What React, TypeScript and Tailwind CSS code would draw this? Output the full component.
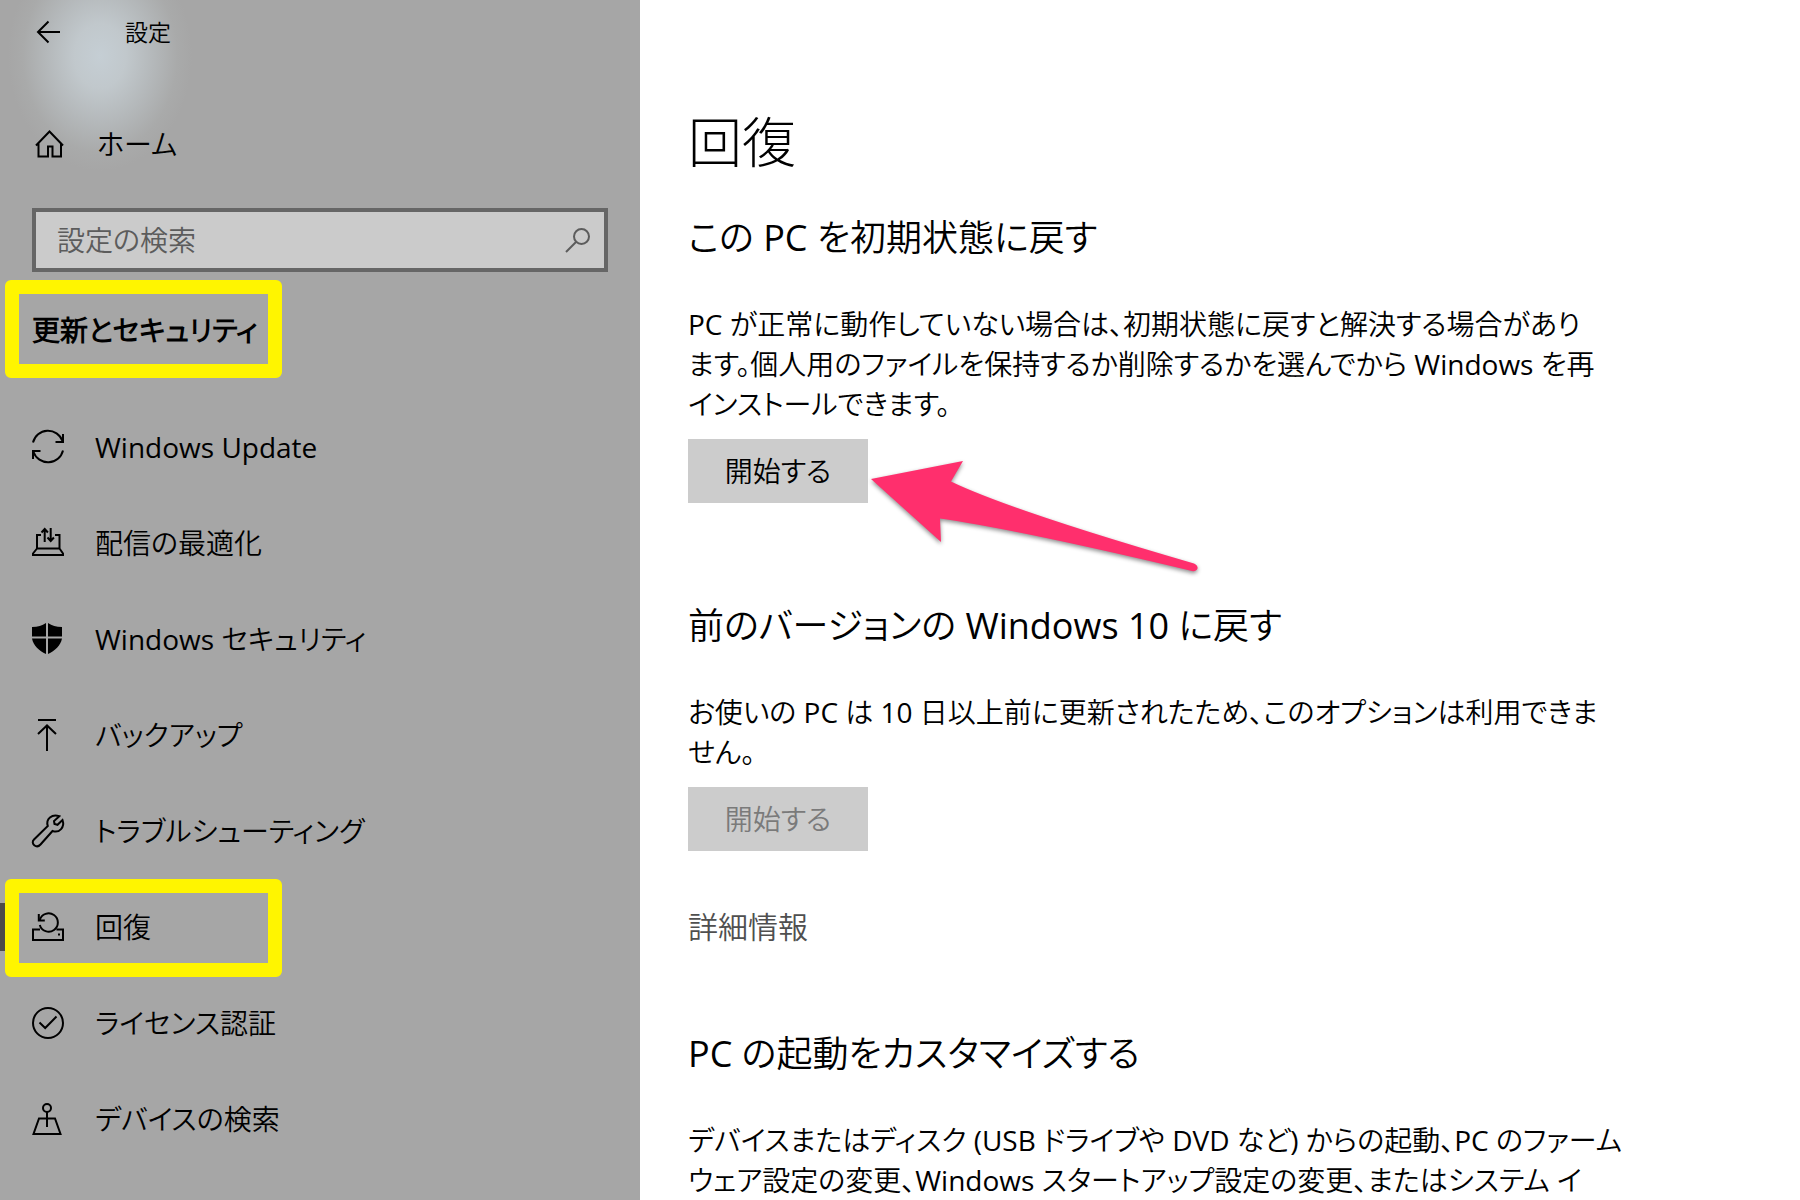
import type { ReactNode } from 'react';

type NavItem = {
  label: string;
  icon: ReactNode;
  active?: boolean;
};

function Icon({ children }: { children: ReactNode }) {
  return (
    <svg viewBox="0 0 32 32" className="size-8 shrink-0 overflow-visible" fill="none" stroke="currentColor" strokeWidth="2" aria-hidden="true">
      {children}
    </svg>
  );
}

const navItems: NavItem[] = [
  {
    label: 'Windows Update',
    icon: (
      <Icon>
        <path d="M1 11.5A15.4 15.4 0 0 1 30.5 10M31 3v8h-7.5M31 19.5A15.4 15.4 0 0 1 1.5 21M1 28v-8h7.5" />
      </Icon>
    ),
  },
  {
    label: '配信の最適化',
    icon: (
      <Icon>
        <path d="M9 8H5v14M23 8h4.5v14M5 21.5h22.5M5 21.5l-4 5V28h30v-1.5l-3.5-5" />
        <path d="M12.7 15V2M9.5 5.5 12.7 2l3.2 3.5M18.7 1v13M15.5 10.5l3.2 3.5 3.2-3.5" />
      </Icon>
    ),
  },
  {
    label: 'Windows セキュリティ',
    icon: (
      <Icon>
        <g fill="currentColor" stroke="none">
          <path d="M14 0v13.5H0V4c6 0 10-1.5 14-4ZM16 0c4 2.5 8 4 14 4v9.5H16ZM0 15.5h14V31C7 27.5 1.5 23 0 15.5ZM16 15.5h14C28.5 23 23 27.5 16 31Z" />
        </g>
      </Icon>
    ),
  },
  {
    label: 'バックアップ',
    icon: (
      <Icon>
        <path d="M6 1h18M15 32V7M6 15l9-8.5 9 8.5" />
      </Icon>
    ),
  },
  {
    label: 'トラブルシューティング',
    icon: (
      <Icon>
        <path d="M27.3 1.2 22 6l.5 3 3 .8L30.5 5C33 12 27.5 18.5 20.5 16l-12 13.5C4.5 34-2 28.5 2 24.5L15.8 11C13.5 4 20-1.5 27.3 1.2Z" />
      </Icon>
    ),
  },
  {
    label: '回復',
    active: true,
    icon: (
      <Icon>
        <path d="M8 18.5H1V29h30V18.5h-6.5M6.8 3v6.5h6" />
        <path d="M7.8 9A9.2 9.2 0 1 1 7.8 14" />
        <path d="M26 23.5h2" />
      </Icon>
    ),
  },
  {
    label: 'ライセンス認証',
    icon: (
      <Icon>
        <circle cx="16" cy="16" r="15" />
        <path d="m7.5 15.5 5.7 5.5L24.5 9.5" />
      </Icon>
    ),
  },
  {
    label: 'デバイスの検索',
    icon: (
      <Icon>
        <circle cx="15" cy="5" r="4" />
        <path d="M15 9v15M7 15.5h16L28.5 31H1.5Z" />
      </Icon>
    ),
  },
];

function Highlight() {
  return (
    <span className="pointer-events-none absolute top-0 left-[5px] z-10 h-[98px] w-[277px] rounded-md border-14 border-[#fff500]" />
  );
}

function Sidebar() {
  return (
    <aside className="w-[640px] shrink-0 bg-[#a6a6a6] bg-[radial-gradient(ellipse_92px_115px_at_100px_56px,#c5ced4_0%,#c1c8cc_28%,#b4b8ba_58%,#a9aaaa_84%,#a6a6a6_100%)]">
      <header className="flex h-16 items-center gap-[61px] pl-9">
        <button type="button" aria-label="戻る">
          <svg viewBox="0 0 28 28" className="size-7" fill="none" stroke="currentColor" strokeWidth="2" aria-hidden="true">
            <path d="M24 14H2M12.5 3.5 2 14l10.5 10.5" />
          </svg>
        </button>
        <span className="text-[23px]">設定</span>
      </header>

      <a href="#home" className="mt-8 flex h-24 items-center gap-[31px] pl-[34px]">
        <svg viewBox="0 0 32 32" className="size-8" fill="none" stroke="currentColor" strokeWidth="2" aria-hidden="true">
          <path d="M2 17.5 15.5 3.5 29 17.5M4.5 15.5v13H14v-10h4.5v10H27v-13" />
        </svg>
        <span>ホーム</span>
      </a>

      <label className="mx-8 mt-4 flex h-16 items-center border-4 border-[#666] bg-[#cbcbcb] pr-[13px] pl-[21px]">
        <input
          type="text"
          aria-label="設定の検索"
          placeholder="設定の検索"
          className="h-14 min-w-0 flex-1 bg-transparent outline-none placeholder:text-[#5c5c5c]"
        />
        <svg viewBox="0 0 26 26" className="size-[26px]" fill="none" stroke="#5c5c5c" strokeWidth="2" aria-hidden="true">
          <circle cx="16.5" cy="9.5" r="7.5" />
          <path d="M11 15 1 25" />
        </svg>
      </label>

      <div className="relative mt-2 flex h-25 items-center pl-8">
        <h2 className="font-bold">更新とセキュリティ</h2>
        <Highlight />
      </div>

      <nav className="mt-[19px]">
        {navItems.map((item) => (
          <a key={item.label} href="#" className="relative flex h-24 items-center gap-[31px] pl-8">
            {item.active && <span className="absolute top-6 left-0 h-12 w-[5px] bg-[#4c4a4a]" />}
            {item.icon}
            <span>{item.label}</span>
            {item.active && <Highlight />}
          </a>
        ))}
      </nav>
    </aside>
  );
}

function Arrow() {
  return (
    <svg
      viewBox="0 0 350 146"
      className="pointer-events-none absolute top-0 left-full -ml-2 h-[146px] w-[350px] max-w-none drop-shadow-[0_2px_2px_rgba(0,0,0,0.45)]"
      aria-hidden="true"
    >
      <path
        fill="#ff2f6d"
        d="M11 40 103 22 91 42.5Q150 71 334 124.5C340 127 338 133.5 332 132Q160 91 80 79.5L81 103Z"
      />
    </svg>
  );
}

const buttonClass = 'relative mt-[15px] flex h-16 w-[180px] items-center justify-center bg-[#ccc]';

export default function App() {
  return (
    <div
      lang="ja"
      className="flex h-screen overflow-hidden bg-white font-['Open_Sans','Noto_Sans_CJK_JP_DemiLight','Noto_Sans_CJK_JP',sans-serif] text-[28px] leading-10 text-black [font-feature-settings:'palt']"
    >
      <Sidebar />

      <main className="min-w-0 flex-1 overflow-hidden pl-12">
        <h1 className="mt-[106px] font-['Open_Sans','Noto_Sans_CJK_JP',sans-serif] text-[54px] leading-[72px] font-light">
          回復
        </h1>

        <section className="mt-8">
          <h2 className="text-4xl leading-[56px]">この PC を初期状態に戻す</h2>
          <p className="mt-[38px]">
            PC が正常に動作していない場合は、初期状態に戻すと解決する場合があり
            <br />
            ます。個人用のファイルを保持するか削除するかを選んでから Windows を再
            <br />
            インストールできます。
          </p>
          <button type="button" className={buttonClass}>
            開始する
            <Arrow />
          </button>
        </section>

        <section className="mt-[95px]">
          <h2 className="text-4xl leading-[56px]">前のバージョンの Windows 10 に戻す</h2>
          <p className="mt-[38px]">
            お使いの PC は 10 日以上前に更新されたため、このオプションは利用できま
            <br />
            せん。
          </p>
          <button type="button" disabled className={`text-[#7a7a7a] ${buttonClass}`}>
            開始する
          </button>
          <a href="#more" className="mt-14 block w-fit text-3xl leading-10 text-[#4f4f4f]">
            詳細情報
          </a>
        </section>

        <section className="mt-[79px]">
          <h2 className="text-4xl leading-[56px]">PC の起動をカスタマイズする</h2>
          <p className="mt-[38px]">
            デバイスまたはディスク (USB ドライブや DVD など) からの起動、PC のファーム
            <br />
            ウェア設定の変更、Windows スタートアップ設定の変更、またはシステム イ
          </p>
        </section>
      </main>
    </div>
  );
}
